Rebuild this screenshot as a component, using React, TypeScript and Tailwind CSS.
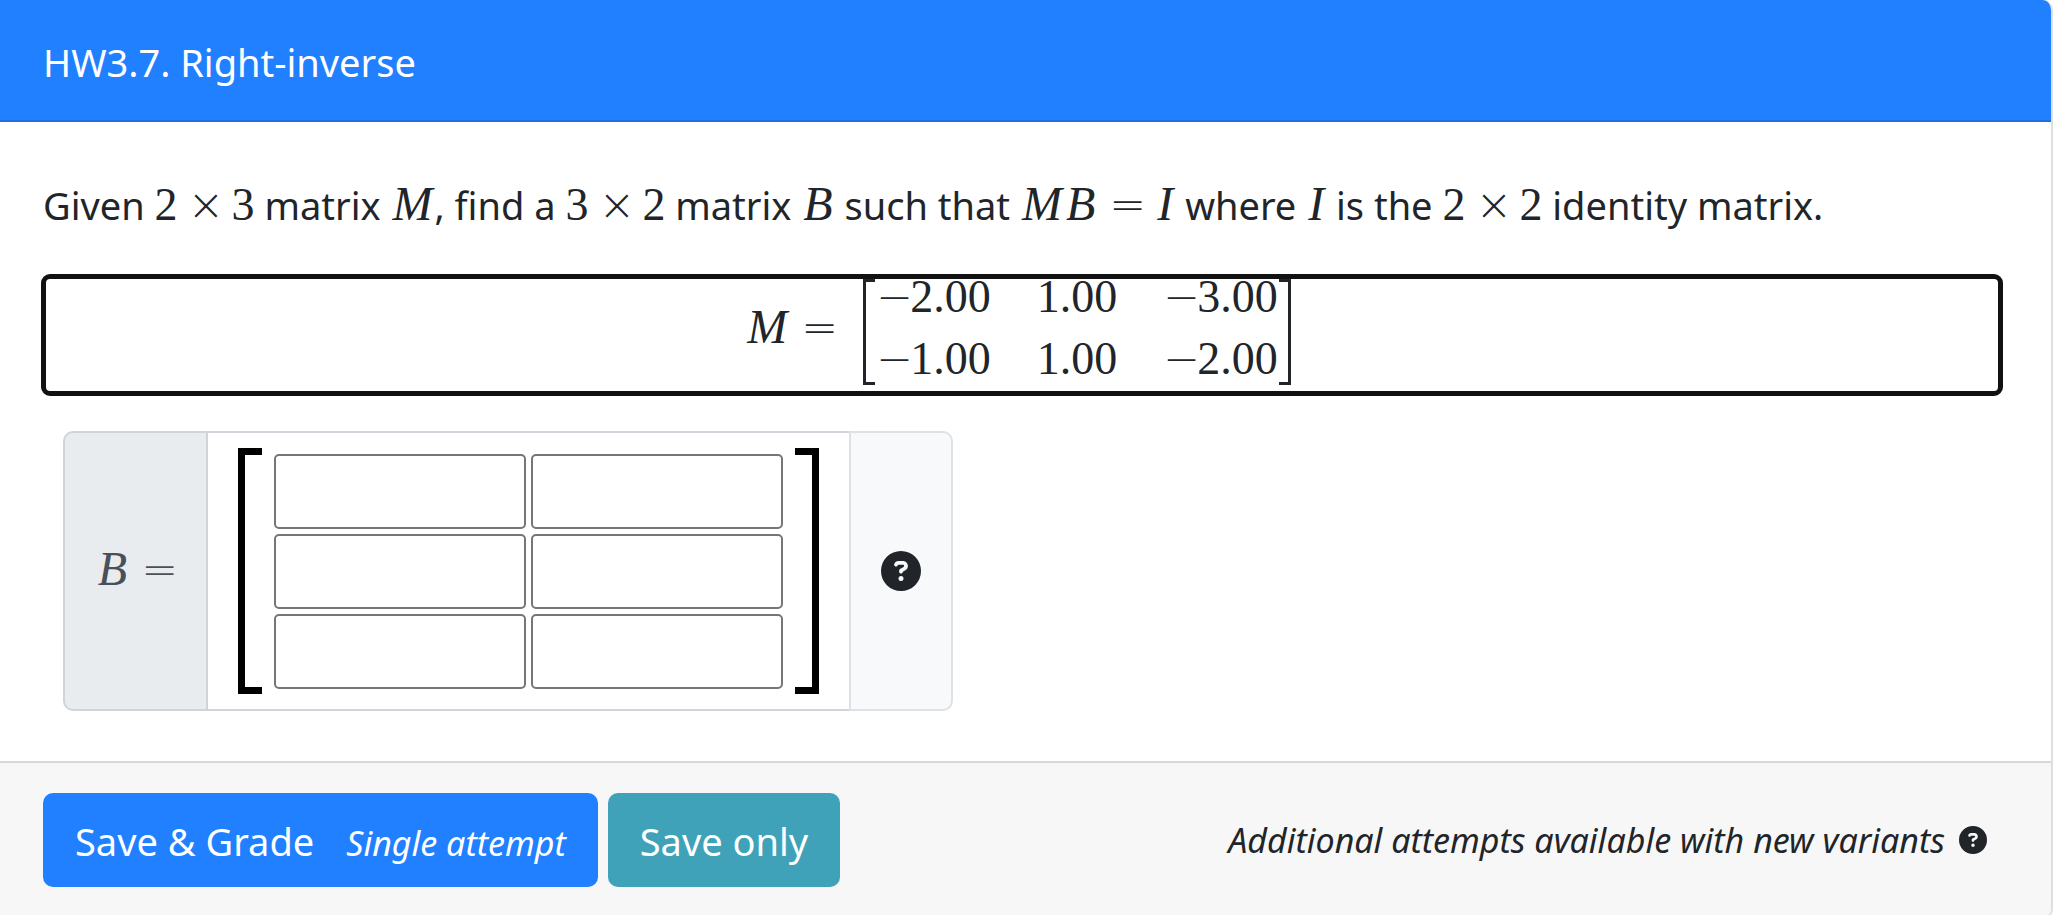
import type { ReactNode } from 'react';
import { FaCircleQuestion } from 'react-icons/fa6';

const matrixM = [
  ['-2.00', '1.00', '-3.00'],
  ['-1.00', '1.00', '-2.00'],
];

const answerRows = [1, 2, 3];
const answerCols = [1, 2];

function Num({ children }: { children: ReactNode }) {
  return <span className="font-['Liberation_Serif',serif] text-[46px] leading-none">{children}</span>;
}

function Var({ children }: { children: ReactNode }) {
  return <i className="px-0.5 font-['Liberation_Serif',serif] text-[48px] leading-none italic">{children}</i>;
}

function Op({ children }: { children: ReactNode }) {
  return (
    <span className="inline-block w-[34px] text-center font-['DejaVu_Sans',sans-serif] text-[44px] leading-none font-extralight">
      {children}
    </span>
  );
}

function Size({ rows, cols }: { rows: number; cols: number }) {
  return (
    <span className="whitespace-nowrap">
      <Num>{rows}</Num>
      <span className="mx-[10px]">
        <Op>×</Op>
      </span>
      <Num>{cols}</Num>
    </span>
  );
}

function Entry({ value }: { value: string }) {
  const negative = value.startsWith('-');
  return (
    <td className="p-0 pr-[46px] text-right whitespace-nowrap last:pr-0">
      <div className="flex h-[62px] items-baseline justify-end">
        {negative && <Op>−</Op>}
        <Num>{negative ? value.slice(1) : value}</Num>
      </div>
    </td>
  );
}

export default function App() {
  return (
    <div className="h-screen overflow-hidden bg-white pr-0.5 font-['Noto_Sans',sans-serif] text-[#212529]">
      <div className="flex flex-col overflow-hidden rounded-r-[10px] border-r-2 border-b-2 border-[#dfdfdf]">
        <header className="border-b-2 border-[#1e70e0] bg-[#2080ff] pt-8 pb-7 pl-[43px] text-white">
          <h1 className="text-[38px] leading-[60px]">HW3.7. Right-inverse</h1>
        </header>

        <main className="pt-[43px] pr-[48px] pb-[50px] pl-[41px]">
          <p className="pl-0.5 text-[38px] leading-[80px]">
            Given <Size rows={2} cols={3} /> matrix <Var>M</Var>, find a <Size rows={3} cols={2} /> matrix{' '}
            <Var>B</Var> such that{' '}
            <span className="whitespace-nowrap">
              <Var>M</Var>
              <Var>B</Var>
              <span className="mx-3">
                <Op>=</Op>
              </span>
              <Var>I</Var>
            </span>{' '}
            where <Var>I</Var> is the <Size rows={2} cols={2} /> identity matrix.
          </p>

          <div className="mt-[29px] flex h-[122px] items-center justify-center rounded-[9px] border-5 border-[#111] pr-2 pb-1.5">
            <div className="mt-1.5 mr-7 leading-[62px]">
              <Var>M</Var>
              <span className="ml-3">
                <Op>=</Op>
              </span>
            </div>
            <div className="flex items-center">
              <span className="h-[106px] w-3 border-y-3 border-l-3 border-[#212529]" />
              <table className="mx-px mt-2 border-separate border-spacing-0">
                <tbody>
                  {matrixM.map((row, r) => (
                    <tr key={r}>
                      {row.map((value, c) => (
                        <Entry key={c} value={value} />
                      ))}
                    </tr>
                  ))}
                </tbody>
              </table>
              <span className="h-[106px] w-3 border-y-3 border-r-3 border-[#212529]" />
            </div>
          </div>

          {/* Answer input group */}
          <div className="mt-[35px] ml-[22px] flex h-[280px] w-fit">
            <div className="flex w-[145px] items-center justify-center rounded-l-[10px] border-2 border-[#ced4da] bg-[#e9ecef] text-[#495057]">
              <div className="pb-1">
                <Var>B</Var>
                <span className="ml-3">
                  <Op>=</Op>
                </span>
              </div>
            </div>
            <div className="flex items-center border-y-2 border-[#ced4da] px-[30px]">
              <span className="h-[246px] w-6 border-7 border-r-0 border-black" />
              <div className="mx-3 grid grid-cols-2 gap-[5px]">
                {answerRows.map((r) =>
                  answerCols.map((c) => (
                    <input
                      key={`${r}-${c}`}
                      type="text"
                      aria-label={`Row ${r}, column ${c}`}
                      className="h-[75px] w-[252px] rounded-[5px] border-2 border-[#767676] bg-white px-3 text-[38px]"
                    />
                  )),
                )}
              </div>
              <span className="h-[246px] w-6 border-7 border-l-0 border-black" />
            </div>
            <button
              type="button"
              aria-label="Help"
              className="flex w-[104px] items-center justify-center rounded-r-[10px] border-2 border-[#dee2e6] bg-[#f8f9fb]"
            >
              <FaCircleQuestion className="size-10" />
            </button>
          </div>
        </main>

        <footer className="flex items-center justify-between border-t-2 border-[#d8d8d8] bg-[#f7f7f7] py-[30px] pr-16 pl-[43px]">
          <div className="flex gap-[10px]">
            <button
              type="submit"
              className="flex h-[94px] items-baseline rounded-[10px] bg-[#2080ff] px-8 text-[38px] leading-[96px] text-white"
            >
              Save &amp; Grade
              <i className="ml-8 text-[34px]">Single attempt</i>
            </button>
            <button
              type="submit"
              className="flex h-[94px] items-baseline rounded-[10px] bg-[#40a2b8] px-8 text-[38px] leading-[96px] text-white"
            >
              Save only
            </button>
          </div>
          <div className="flex items-center gap-[14px] text-[34px]">
            <em>Additional attempts available with new variants</em>
            <button type="button" aria-label="About new variants">
              <FaCircleQuestion className="size-7" />
            </button>
          </div>
        </footer>
      </div>
    </div>
  );
}
